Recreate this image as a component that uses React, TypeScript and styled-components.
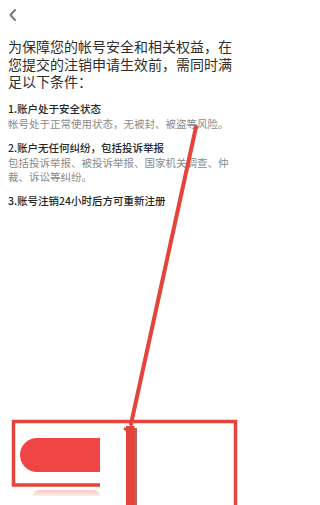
import styled, { createGlobalStyle } from "styled-components";

const GlobalStyle = createGlobalStyle`
  html, body {
    margin: 0;
    padding: 0;
    background: #ffffff;
  }
  body {
    font-family: "Noto Sans CJK SC", "Noto Sans", sans-serif;
  }
`;

const Page = styled.div`
  position: relative;
  width: 251px;
  height: 505px;
  overflow: hidden;
  background: #ffffff;
  display: flex;
  flex-direction: column;
`;

const TopBar = styled.div`
  height: 38px;
  display: flex;
  align-items: flex-start;
  padding: 8px 0 0 8px;
  box-sizing: border-box;
`;

const Content = styled.div`
  padding: 0 15px 0 8px;
  display: flex;
  flex-direction: column;
`;

const Heading = styled.p`
  margin: 0 0 9px;
  font-size: 14px;
  line-height: 17.5px;
  color: #2e2e2e;
`;

const Rule = styled.div`
  display: flex;
  flex-direction: column;
  margin-bottom: 8px;
`;

const RuleTitle = styled.div`
  font-size: 10.5px;
  line-height: 17px;
  font-weight: 500;
  color: #262626;
`;

const RuleText = styled.div`
  font-size: 10.5px;
  line-height: 14px;
  color: #8a8a8a;
`;

const Footer = styled.div`
  margin-top: auto;
  padding: 0 0 9px 20px;
  display: flex;
  flex-direction: column;
`;

const Pill = styled.div`
  width: 110px;
  height: 34px;
  border-radius: 17px 0 0 17px;
  background: #ef4545;
`;

const Reflection = styled.div`
  margin: 18px 0 0 13px;
  width: 67px;
  height: 6px;
  border-radius: 6px 6px 0 0;
  background: linear-gradient(#f5c8c4, #fcefee);
`;

const Overlay = styled.svg`
  position: absolute;
  inset: 0;
  pointer-events: none;
`;

const BackIcon = () => (
  <svg width="10" height="14" viewBox="0 0 10 14">
    <path
      d="M7 2 L2.5 7 L7 12"
      fill="none"
      stroke="#7a7a7a"
      strokeWidth="2"
      strokeLinecap="round"
      strokeLinejoin="round"
    />
  </svg>
);

const rules = [
  {
    title: "1.账户处于安全状态",
    text: "帐号处于正常使用状态，无被封、被盗等风险。",
  },
  {
    title: "2.账户无任何纠纷，包括投诉举报",
    text: "包括投诉举报、被投诉举报、国家机关调查、仲裁、诉讼等纠纷。",
  },
  { title: "3.账号注销24小时后方可重新注册", text: "" },
];

const App = () => {
  return (
    <Page>
      <GlobalStyle />
      <TopBar>
        <BackIcon />
      </TopBar>
      <Content>
        <Heading>
          为保障您的帐号安全和相关权益，在您提交的注销申请生效前，需同时满足以下条件：
        </Heading>
        {rules.map((r) => (
          <Rule key={r.title}>
            <RuleTitle>{r.title}</RuleTitle>
            {r.text && <RuleText>{r.text}</RuleText>}
          </Rule>
        ))}
      </Content>
      <Footer>
        <Pill />
        <Reflection />
      </Footer>

      {/* hand-drawn annotation over the screenshot */}
      <Overlay width="251" height="505" viewBox="0 0 251 505">
        <rect x="100" y="424" width="27" height="81" fill="#ffffff" />
        <line x1="196" y1="127" x2="131" y2="424" stroke="#e5443a" strokeWidth="4" strokeLinecap="round" />
        <path
          d="M13.5 486 L13.5 421.5 L235.5 421.5 L235.5 505"
          fill="none"
          stroke="#e5443a"
          strokeWidth="3.5"
        />
        <line x1="12" y1="485" x2="100" y2="485" stroke="#e5443a" strokeWidth="3.5" />
        <rect x="134" y="428" width="3" height="77" fill="#b8634f" />
        <rect x="126" y="426" width="8.5" height="79" fill="#e5443a" />
        <path d="M124 428 L130 433" stroke="#e5443a" strokeWidth="2.5" />
      </Overlay>
    </Page>
  );
};

export default App;
